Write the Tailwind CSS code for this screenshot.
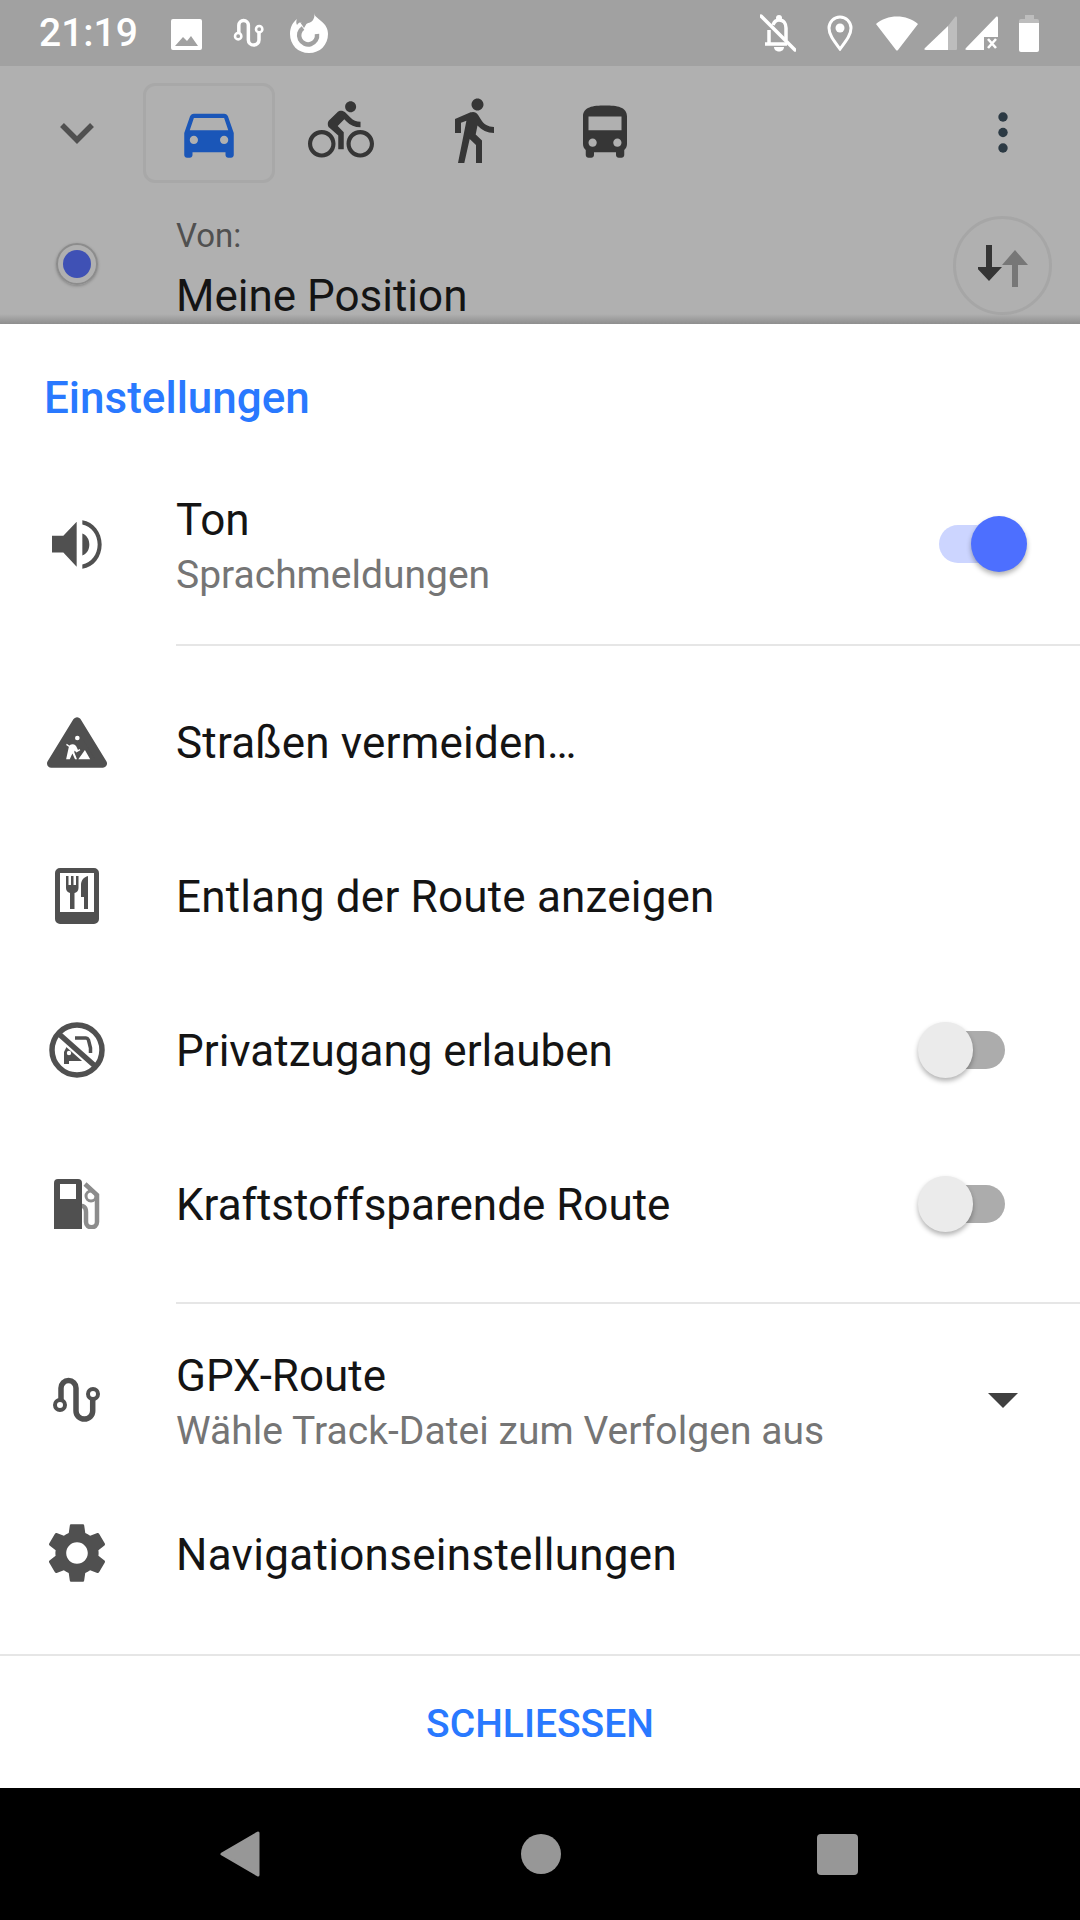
<!DOCTYPE html>
<html lang="de">
<head>
    <meta charset="UTF-8">
    <meta name="viewport" content="width=device-width, initial-scale=1.0">
    <title>Einstellungen</title>
    <script src="https://cdn.jsdelivr.net/npm/@tailwindcss/browser@4"></script>
</head>
<body class="bg-white font-['Roboto',sans-serif]">
<div class="w-[1080px] h-[1920px] flex flex-col overflow-hidden">

    <!-- status bar -->
    <div class="h-[66px] bg-[#a1a1a1] flex items-center justify-between shrink-0 text-white">
        <div class="flex items-center">
            <span class="ml-[39px] text-[39px] font-medium leading-none w-[132px]">21:19</span>
            <svg class="w-[31px] h-[31px] mt-[2px]" viewBox="0 0 31 31"><path fill="#fff" fill-rule="evenodd" d="M2 0h27a2 2 0 0 1 2 2v27a2 2 0 0 1-2 2H2a2 2 0 0 1-2-2V2a2 2 0 0 1 2-2zM4 27l8-9 4 4 4-5 7 10z"/></svg>
            <svg class="w-[42px] h-[42px] ml-[26px]" viewBox="0 0 66 66"><path fill="none" stroke="#fff" stroke-width="5.500" d="M17 33V21a7.500 7.500 0 0 1 15 0V44a8.350 8 0 0 0 16.700 0V32"/><circle cx="16" cy="38" r="5" fill="#a1a1a1" stroke="#fff" stroke-width="4"/><circle cx="49" cy="27" r="5" fill="#a1a1a1" stroke="#fff" stroke-width="4"/></svg>
            <svg class="w-[38px] h-[40px] ml-[20px]" viewBox="0 0 38 40"><path fill="#fff" d="M24 0c1 4 3 4 7 8 5 4 7 8 7 13 0 11-8 19-19 19S0 32 0 21C0 14 3 9 7 6c-1 2-1 4 0 6 1-2 3-3 5-3-1 1 0 2 3 2 3-1 6-1 8-4 1-2 2-4 1-7z"/><path fill="none" stroke="#a1a1a1" stroke-width="4.500" d="M13 15a9 9 0 1 0 14 6"/><path fill="#a1a1a1" d="M10 9l7 1-3 5z"/></svg>
        </div>
        <div class="flex items-center">
            <svg class="w-[36px] h-[38px]" viewBox="0 0 36 38"><g fill="none" stroke="#fff" stroke-width="3.500"><path d="M5 30h22M9 30V16M13 11c1-3 3-5 6-5 5 0 7 4 7 8v12"/><path d="M1 2l34 34" stroke-linecap="round"/></g><circle cx="19" cy="4" r="3" fill="#fff"/><path fill="#fff" d="M14 33h10c0 6-10 6-10 0z"/></svg>
            <svg class="w-[26px] h-[36px] ml-[31px]" viewBox="0 0 26 36"><path fill="none" stroke="#fff" stroke-width="3" d="M13 34C7 26 2 20 2 13a11 11 0 0 1 22 0c0 7-5 13-11 21z"/><circle cx="13" cy="13" r="4.500" fill="#fff"/></svg>
            <svg class="w-[42px] h-[35px] ml-[23px]" viewBox="0 0 42 35"><path fill="#fff" d="M0 8C11-2 31-2 42 8L22 34c-.6.8-1.400.8-2 0z"/></svg>
            <svg class="w-[33px] h-[34px] ml-[6px]" viewBox="0 0 33 34"><path fill="#bdbdbd" d="M33 2v31a1 1 0 0 1-1 1H24V10l7-9c1-1 2-.4 2 1z"/><path fill="#fff" d="M24 10v24H2c-2 0-2-1-1-2z"/></svg>
            <svg class="w-[33px] h-[34px] ml-[8px]" viewBox="0 0 33 34"><path fill="#fff" d="M33 2v19H19v13H2c-2 0-2-1-1-2L31 1c1-1 2-.4 2 1z"/><path stroke="#fff" stroke-width="2.600" d="M23 23l8 9M31 23l-8 9"/></svg>
            <svg class="w-[20px] h-[37px] ml-[21px] mr-[41px]" viewBox="0 0 20 37"><path fill="#bdbdbd" d="M6 0h9v4h3a2 2 0 0 1 2 2v4H0V6a2 2 0 0 1 2-2h4z"/><path fill="#fff" d="M0 8h20v27a2 2 0 0 1-2 2H2a2 2 0 0 1-2-2z"/></svg>
        </div>
    </div>

    <!-- route header, dimmed by the sheet -->
    <div class="h-[258px] bg-[#b0b0b0] relative shrink-0 overflow-hidden">
        <div class="flex items-center h-[100px] mt-[17px]">
            <svg class="w-[66px] h-[66px] ml-[44px] mr-[33px]" viewBox="0 0 66 66"><path fill="none" stroke="#505050" stroke-width="5.500" d="M18 25l15 15 15-15"/></svg>
            <div class="w-[132px] h-[100px] rounded-[12px] border-[3px] border-[#a8a8a8] flex items-center justify-center">
                <svg class="w-[66px] h-[66px]" viewBox="0 0 24 24"><path fill="#1a56b8" d="M18.920 6.010C18.720 5.420 18.160 5 17.500 5h-11c-.66 0-1.210.42-1.420 1.010L3 12v8c0 .55.45 1 1 1h1c.55 0 1-.45 1-1v-1h12v1c0 .55.45 1 1 1h1c.55 0 1-.45 1-1v-8l-2.080-5.990zM6.500 16c-.83 0-1.500-.67-1.500-1.500S5.670 13 6.500 13s1.500.67 1.500 1.500S7.330 16 6.500 16zm11 0c-.83 0-1.500-.67-1.500-1.500s.67-1.500 1.500-1.500 1.500.67 1.500 1.500-.67 1.500-1.500 1.500zM5 11l1.500-4.500h11L19 11H5z"/></svg>
            </div>
            <div class="w-[132px] flex justify-center">
                <svg class="w-[66px] h-[66px] mb-[6px]" viewBox="0 0 24 24"><path fill="#363636" d="M15.500 5.500c1.100 0 2-.9 2-2s-.9-2-2-2-2 .9-2 2 .9 2 2 2zM5 12c-2.800 0-5 2.200-5 5s2.200 5 5 5 5-2.200 5-5-2.200-5-5-5zm0 8.500c-1.900 0-3.500-1.600-3.500-3.500s1.600-3.500 3.500-3.500 3.500 1.600 3.500 3.500-1.600 3.500-3.500 3.500zm5.800-10l2.400-2.400.8.800c1.300 1.300 3 2.100 5.100 2.100V9c-1.500 0-2.700-.6-3.600-1.500l-1.900-1.900c-.5-.4-1-.6-1.600-.6s-1.100.2-1.400.6L7.800 8.400c-.4.4-.6.900-.6 1.400 0 .6.2 1.100.6 1.400L11 14v5h2v-6.200l-2.200-2.300zM19 12c-2.800 0-5 2.200-5 5s2.200 5 5 5 5-2.200 5-5-2.200-5-5-5zm0 8.500c-1.900 0-3.500-1.600-3.500-3.500s1.600-3.500 3.500-3.500 3.500 1.600 3.500 3.500-1.600 3.500-3.500 3.500z"/></svg>
            </div>
            <div class="w-[132px] flex justify-center">
                <svg class="w-[72px] h-[72px] mb-[6px]" viewBox="0 0 24 24"><path fill="#363636" d="M13.500 5.500c1.100 0 2-.9 2-2s-.9-2-2-2-2 .9-2 2 .9 2 2 2zM9.800 8.900L7 23h2.100l1.800-8 2.100 2v6h2v-7.500l-2.100-2 .6-3C14.800 12 16.800 13 19 13v-2c-1.900 0-3.500-1-4.300-2.400l-1-1.600c-.4-.6-1-1-1.700-1-.3 0-.5.1-.8.1L6 8.300V13h2V9.600l1.800-.7"/></svg>
            </div>
            <div class="w-[132px] flex justify-center">
                <svg class="w-[66px] h-[66px]" viewBox="0 0 24 24"><path fill="#363636" d="M4 16c0 .88.39 1.670 1 2.220V20c0 .55.45 1 1 1h1c.55 0 1-.45 1-1v-1h8v1c0 .55.45 1 1 1h1c.55 0 1-.45 1-1v-1.780c.61-.55 1-1.340 1-2.220V6c0-3.500-3.580-4-8-4s-8 .5-8 4v10zm3.500 1c-.83 0-1.500-.67-1.500-1.500S6.670 14 7.500 14s1.500.67 1.500 1.500S8.330 17 7.500 17zm9 0c-.83 0-1.500-.67-1.500-1.500s.67-1.500 1.500-1.500 1.500.67 1.500 1.500-.67 1.500-1.500 1.500zm1.500-6H6V6h12v5z"/></svg>
            </div>
            <svg class="w-[10px] h-[42px] ml-auto mr-[72px]" viewBox="0 0 10 42"><g fill="#2c3a44"><circle cx="5" cy="5" r="4.700"/><circle cx="5" cy="20.500" r="4.700"/><circle cx="5" cy="36" r="4.700"/></g></svg>
        </div>
        <div class="flex items-start">
            <div class="w-[176px] flex justify-center pr-[22px] pt-[60px]">
                <div class="w-[42px] h-[42px] rounded-full border-[2px] border-[#8c8c8c] flex items-center justify-center shadow-[0_1px_3px_rgba(0,0,0,0.25)]">
                    <div class="w-[28px] h-[28px] rounded-full bg-[#3f51b5]"></div>
                </div>
            </div>
            <div class="pt-[34px]">
                <div class="text-[33px] leading-[38px] text-[#505050]">Von:</div>
                <div class="text-[44px] leading-[48px] mt-[17px] text-[#141414]">Meine Position</div>
            </div>
        </div>
        <div class="absolute left-[953px] top-[150px] w-[99px] h-[99px] rounded-full border-[3px] border-[#a6a6a6] flex items-center justify-center">
            <svg class="w-[50px] h-[42px]" viewBox="0 0 50 42"><path fill="#353535" d="M8 0h6v22h10L11 36-2 22H8z"/><path fill="#777" d="M43 42h-6V20H27L40 5l13 15H43z" transform="translate(-3 0)"/></svg>
        </div>
        <div class="absolute bottom-0 left-0 right-0 h-[10px] bg-gradient-to-b from-transparent to-[#8e8e8e]"></div>
    </div>

    <!-- settings sheet -->
    <div class="h-[1464px] shrink-0 bg-white flex flex-col">
        <div class="h-[124px] pl-[44px] pt-[52px] shrink-0">
            <div class="text-[44px] leading-[44px] font-medium text-[#2979ff]">Einstellungen</div>
        </div>

        <div class="h-[192px] flex items-center shrink-0">
            <div class="w-[154px] flex justify-center">
                <svg class="w-[50px] h-[49px]" viewBox="96 120 150 146"><path fill="#505050" d="M96 167h34l40-42v135l-40-43H96zM187 160c14 6 21 18 21 33s-7 27-21 33zM187 120c34 5 58 36 58 73s-24 68-58 73v-13c27-5 46-31 46-60s-19-55-46-60z"/></svg>
            </div>
            <div class="pl-[22px] pt-[5px] flex-1">
                <div class="text-[44px] leading-[48px] text-[#141414]">Ton</div>
                <div class="text-[39px] leading-[44px] mt-[9px] text-[#757575]">Sprachmeldungen</div>
            </div>
            <div class="relative w-[71px] h-[38px] rounded-full bg-[#ccd5ff] mr-[70px]">
                <div class="absolute right-[-17px] top-[-9px] w-[56px] h-[56px] rounded-full bg-[#4d6fff] shadow-[0_3px_5px_rgba(0,0,0,0.3)]"></div>
            </div>
        </div>
        <div class="h-[2px] bg-[#e6e6e6] ml-[176px] mt-[4px] shrink-0"></div>

        <div class="h-[154px] mt-[19px] flex items-center shrink-0">
            <div class="w-[154px] flex justify-center">
                <svg class="w-[60px] h-[51px]" viewBox="80 705 182 153"><path fill="#505050" stroke="#505050" stroke-width="26" stroke-linejoin="round" d="M171 718l78 127H93z"/><circle cx="172" cy="768" r="7" fill="#fff"/><path fill="#fff" d="M175 832l20-28 16 28zM138 832l8-36c1-6 5-9 12-9 6 0 9 3 11 7l5 10 5-3 2 4-12 7-6-8v8l8 20h-6l-8-17-8 17zM140 785l31 22-2 3-31-21z"/></svg>
            </div>
            <div class="pl-[22px] pt-[2px] tracking-[0.2px] text-[44px] leading-[48px] text-[#141414]">Straßen vermeiden…</div>
        </div>

        <div class="h-[154px] flex items-center shrink-0">
            <div class="w-[154px] flex justify-center">
                <svg class="w-[44px] h-[56px]" viewBox="0 0 44 56"><path fill="#505050" fill-rule="evenodd" d="M5 0h34a5 5 0 0 1 5 5v46a5 5 0 0 1-5 5H5a5 5 0 0 1-5-5V5a5 5 0 0 1 5-5zM5 5v39h34V5z"/><path fill="#505050" d="M11 8h2.500v9H16V8h2.500v9H21V8h2.500v12c0 3-2 4.500-4 5V41H15V25c-2.500-.5-4-2.500-4-5zM33 8v33h-4V29h-3V17c0-5 3-8 7-9z"/></svg>
            </div>
            <div class="pl-[22px] pt-[2px] tracking-[0.2px] text-[44px] leading-[48px] text-[#141414]">Entlang der Route anzeigen</div>
        </div>

        <div class="h-[154px] flex items-center shrink-0">
            <div class="w-[154px] flex justify-center">
                <svg class="w-[56px] h-[56px]" viewBox="0 0 56 56"><circle cx="28" cy="28" r="25" fill="none" stroke="#505050" stroke-width="5.500"/><path fill="none" stroke="#505050" stroke-width="3.500" d="M26 16h11c1 0 2 1 2.500 2l2 8v5"/><path fill="#505050" d="M15 42V30l4-8 16 16v1H20v3z"/><circle cx="20" cy="31" r="2.200" fill="#fff"/><path stroke="#fff" stroke-width="9" d="M16 18l26 23"/><path stroke="#505050" stroke-width="5.500" d="M10 12l36 32"/></svg>
            </div>
            <div class="pl-[22px] pt-[2px] flex-1 text-[44px] leading-[48px] text-[#141414]">Privatzugang erlauben</div>
            <div class="relative w-[71px] h-[38px] rounded-full bg-[#acacac] mr-[75px]">
                <div class="absolute left-[-16px] top-[-9px] w-[55px] h-[56px] rounded-full bg-[#ebebeb] shadow-[0_3px_5px_rgba(0,0,0,0.3)]"></div>
            </div>
        </div>

        <div class="h-[154px] flex items-center shrink-0">
            <div class="w-[154px] flex justify-center">
                <svg class="w-[46px] h-[50px]" viewBox="0 0 46 50"><path fill="#505050" fill-rule="evenodd" d="M4 0h20a4 4 0 0 1 4 4v46H0V4a4 4 0 0 1 4-4zM6 5v15h16V5z"/><path fill="none" stroke="#8c8c8c" stroke-width="4.500" d="M31 5l12 11v27c0 7-11 7-11 0V33c0-6-4-6-4-6"/><circle cx="37" cy="17" r="5" fill="none" stroke="#8c8c8c" stroke-width="3"/></svg>
            </div>
            <div class="pl-[22px] pt-[2px] flex-1 text-[44px] leading-[48px] text-[#141414]">Kraftstoffsparende Route</div>
            <div class="relative w-[71px] h-[38px] rounded-full bg-[#acacac] mr-[75px]">
                <div class="absolute left-[-16px] top-[-9px] w-[55px] h-[56px] rounded-full bg-[#ebebeb] shadow-[0_3px_5px_rgba(0,0,0,0.3)]"></div>
            </div>
        </div>
        <div class="h-[2px] bg-[#e6e6e6] ml-[176px] mt-[21px] shrink-0"></div>

        <div class="h-[192px] flex items-center shrink-0">
            <div class="w-[154px] flex justify-center">
                <svg class="w-[66px] h-[66px]" viewBox="0 0 66 66"><path fill="none" stroke="#505050" stroke-width="5.500" d="M17 33V21a7.500 7.500 0 0 1 15 0V44a8.350 8 0 0 0 16.700 0V32"/><circle cx="16" cy="38" r="5" fill="#fff" stroke="#505050" stroke-width="4"/><circle cx="49" cy="27" r="5" fill="#fff" stroke="#505050" stroke-width="4"/></svg>
            </div>
            <div class="pl-[22px] pt-[4px] flex-1">
                <div class="text-[44px] leading-[48px] text-[#141414]">GPX-Route</div>
                <div class="text-[39px] leading-[44px] mt-[9px] tracking-[0.05px] text-[#757575]">Wähle Track-Datei zum Verfolgen aus</div>
            </div>
            <svg class="w-[30px] h-[15px] mr-[62px]" viewBox="0 0 30 15"><path fill="#404040" d="M0 0h30L15 15z"/></svg>
        </div>

        <div class="h-[154px] -mt-[20px] flex items-center shrink-0">
            <div class="w-[154px] flex justify-center">
                <svg class="w-[72px] h-[72px]" viewBox="0 0 24 24"><path fill="#505050" d="M19.140 12.940c.04-.3.06-.61.06-.94 0-.32-.02-.64-.07-.94l2.030-1.580c.18-.14.23-.41.12-.61l-1.920-3.320c-.12-.22-.37-.29-.59-.22l-2.390.96c-.5-.38-1.030-.7-1.620-.94l-.36-2.540c-.04-.24-.24-.41-.48-.41h-3.840c-.24 0-.43.17-.47.41l-.36 2.540c-.59.24-1.130.57-1.620.94l-2.390-.96c-.22-.08-.47 0-.59.22L2.740 8.870c-.12.21-.08.47.12.61l2.030 1.580c-.05.3-.09.63-.09.94s.02.64.07.94l-2.030 1.580c-.18.14-.23.41-.12.61l1.920 3.320c.12.22.37.29.59.22l2.390-.96c.5.38 1.030.7 1.620.94l.36 2.540c.05.24.24.41.48.41h3.840c.24 0 .44-.17.47-.41l.36-2.540c.59-.24 1.130-.56 1.620-.94l2.390.96c.22.08.47 0 .59-.22l1.920-3.320c.12-.22.07-.47-.12-.61l-2.010-1.580zM12 15.600c-1.980 0-3.600-1.620-3.600-3.600s1.620-3.600 3.600-3.600 3.600 1.620 3.600 3.600-1.620 3.600-3.600 3.600z"/></svg>
            </div>
            <div class="pl-[22px] pt-[4px] tracking-[0.3px] text-[44px] leading-[48px] text-[#141414]">Navigationseinstellungen</div>
        </div>

        <div class="mt-auto h-[134px] pt-[4px] border-t-[2px] border-[#e6e6e6] flex items-center justify-center shrink-0">
            <span class="text-[39px] font-medium text-[#2979ff]">SCHLIESSEN</span>
        </div>
    </div>

    <!-- navigation bar -->
    <div class="h-[132px] bg-black shrink-0 flex items-center">
        <svg class="w-[40px] h-[46px] ml-[220px]" viewBox="0 0 40 46"><path fill="#979797" stroke="#979797" stroke-width="3" stroke-linejoin="round" d="M38 2v42L2 23z"/></svg>
        <div class="w-[40px] h-[40px] rounded-full bg-[#979797] ml-[261px]"></div>
        <div class="w-[41px] h-[41px] rounded-[4px] bg-[#979797] ml-[256px]"></div>
    </div>
</div>
</body>
</html>
